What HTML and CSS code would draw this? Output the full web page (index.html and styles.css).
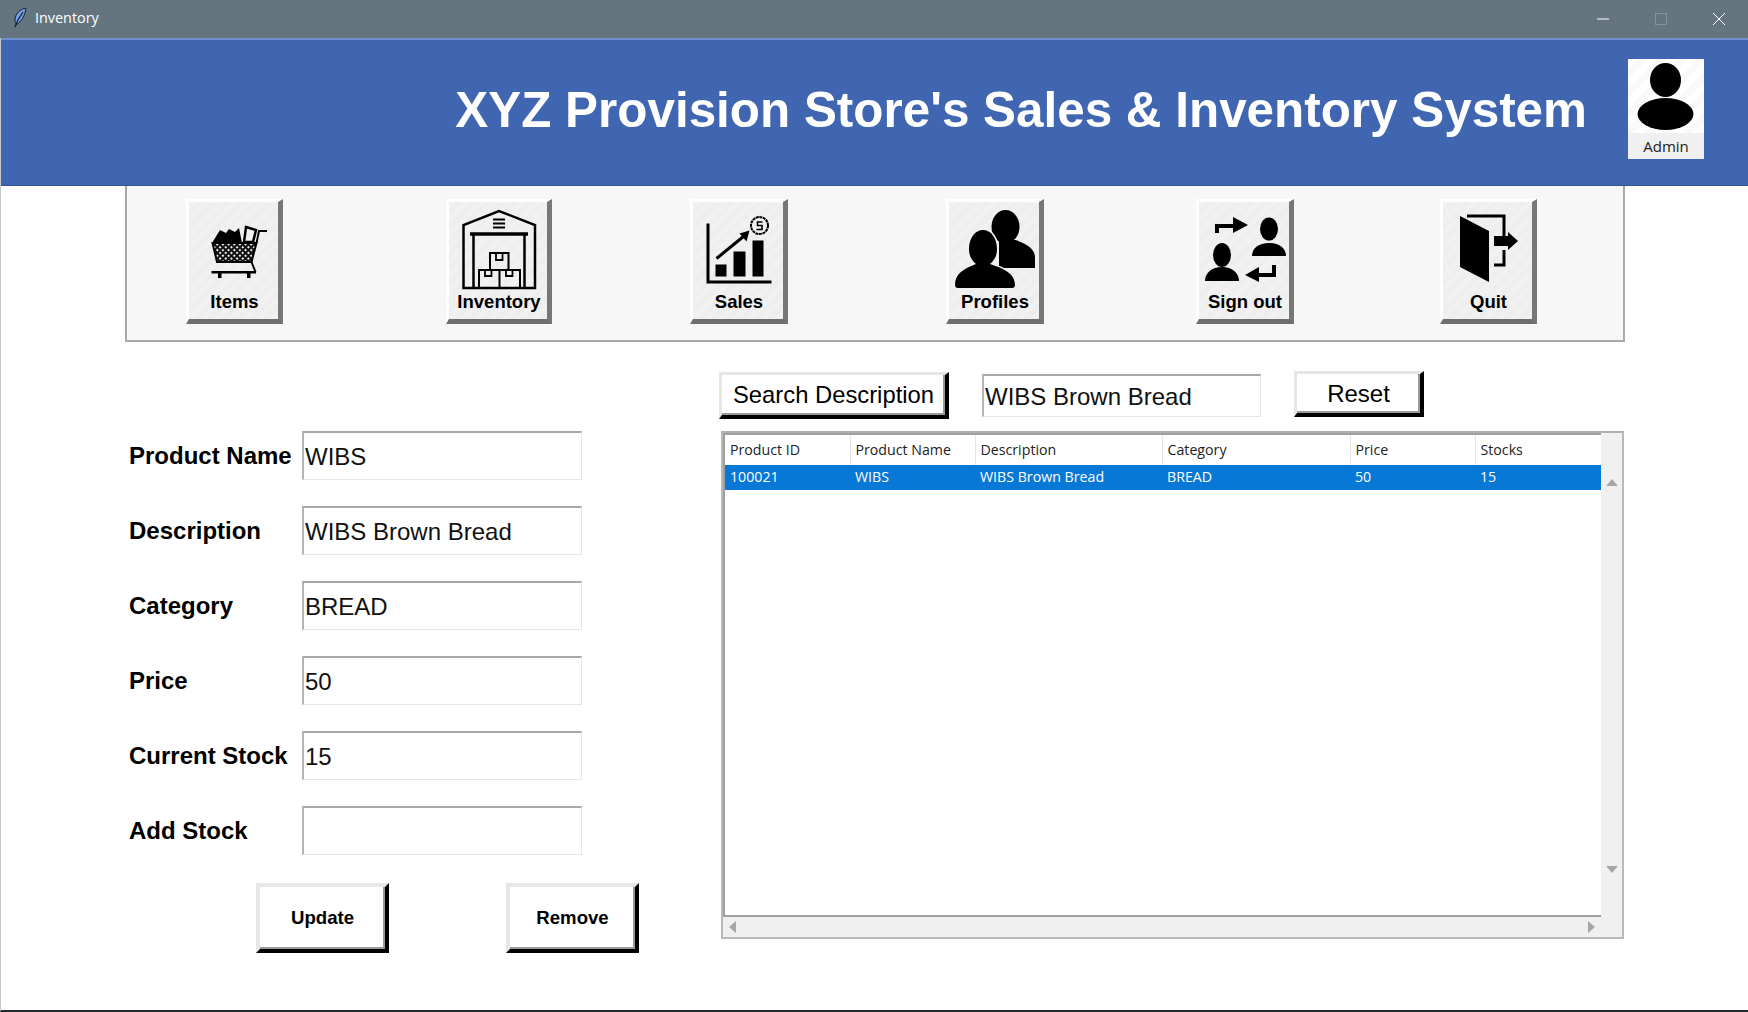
FILE: index.html
```html
<!DOCTYPE html>
<html>

<head>
  <title>Inventory</title>
  <meta charset="utf-8" />
  <link rel="stylesheet" href="styles.css">
</head>

<body>
  <div class="window">
    <div class="titlebar">
      <svg class="feather" width="14" height="20" viewBox="0 0 14 20">
        <path d="M13 0C7 1 2 6 2 12c0 2 .5 3 1.500 4.500C8 14 12 8 13 0z" fill="#6f9fe6" stroke="#16202c" stroke-width="1" />
        <path d="M10 4C7 8 4 13 2 19" fill="none" stroke="#0d141c" stroke-width="1.200" />
      </svg>
      <span class="titlebar-name">Inventory</span>
      <div class="controls">
        <div class="control"><svg width="12" height="12" viewBox="0 0 12 12"><path d="M0 6h12" stroke="#fff" /></svg></div>
        <div class="control"><svg width="12" height="12" viewBox="0 0 12 12"><rect x="0.5" y="0.5" width="11" height="11" fill="none" stroke="#84929b" /></svg></div>
        <div class="control"><svg width="12" height="12" viewBox="0 0 12 12"><path d="M0 0l12 12M12 0L0 12" stroke="#fff" /></svg></div>
      </div>
    </div>

    <header class="banner">
      <h1>XYZ Provision Store's Sales &amp; Inventory System</h1>
      <div class="user">
        <div class="user-pic">
          <svg width="75" height="74" viewBox="0 0 75 74">
            <ellipse cx="37.5" cy="21" rx="15.5" ry="17" />
            <ellipse cx="37.5" cy="55" rx="28" ry="16" />
          </svg>
        </div>
        <div class="user-name">Admin</div>
      </div>
    </header>

    <nav class="toolbar">
      <button class="tool tool-items">
        <svg width="90" height="88" viewBox="0 0 90 88">
          <defs>
            <pattern id="mesh" width="4" height="4" patternUnits="userSpaceOnUse" patternTransform="rotate(45)">
              <rect width="4" height="4" fill="#111" />
              <rect x="1" y="1" width="2" height="2" fill="#e8e8e8" />
            </pattern>
          </defs>
          <path d="M23 41l8-13 6 3 3-4 6 3 4-4 3 15z" />
          <path d="M57 25l10 3-3 12h-9z" fill="#f1f1f1" stroke="#000" stroke-width="2.5" />
          <path d="M23.500 41h44l-5 19H28z" fill="url(#mesh)" stroke="#000" stroke-width="2" />
          <path d="M67.500 41l2.500-12h8" fill="none" stroke="#000" stroke-width="2" />
          <path d="M62.500 60l4 10" fill="none" stroke="#000" stroke-width="2" />
          <path d="M22.500 69H67v2.500H22.500zM29 71.500h3.500V76H29zM58 71.500h3.500V76H58z" />
        </svg>
        <span>Items</span>
      </button>
      <button class="tool tool-inventory">
        <svg width="90" height="88" viewBox="0 0 90 88" fill="none" stroke="#000" stroke-width="2.500">
          <path d="M10.500 86V23L46 9l36 14v63z" />
          <path d="M17 32h58" stroke-width="3.500" />
          <path d="M20.500 33v53M71.500 33v53" />
          <path d="M40 17.500h12M40 21.500h12M40 25.500h12" stroke-width="2" />
          <path d="M37 51h18.500v17H37zM26 68h20.500v18H26zM46.500 68H67v18H46.500z" stroke-width="2" />
          <path d="M43 51v7h6.500v-7M32 68v6h6.500v-6M53 68v6h6.500v-6" stroke-width="1.800" />
        </svg>
        <span>Inventory</span>
      </button>
      <button class="tool tool-sales">
        <svg width="90" height="88" viewBox="0 0 90 88">
          <g transform="translate(1.500 1.500)">
            <path d="M12 20h3v57h62v3H12z" />
            <path d="M21 61h11v12H21zM39 48h12v25H39zM58 37h11v36H58z" />
            <path d="M22 55L49 33" stroke="#000" stroke-width="3" />
            <path d="M55 27l-3 11-7-8z" />
            <circle cx="65" cy="22" r="8.500" fill="none" stroke="#000" stroke-width="2" stroke-dasharray="3 .6" />
            <path d="M68 18.500h-5v3.500h4.500v4H62" fill="none" stroke="#000" stroke-width="1.600" />
          </g>
        </svg>
        <span>Sales</span>
      </button>
      <button class="tool tool-profiles">
        <svg width="90" height="88" viewBox="0 0 90 88">
          <ellipse cx="56.500" cy="24.700" rx="14" ry="16.700" />
          <path d="M50 38h17c12 5 19 9 19 18v10H50z" />
          <path d="M6 83c0-11 8-16 21-21-5-4-7-9-7-15 0-11 6-19 14-19s14 8 14 19c0 6-2 11-7 15 15 5 25 10 25 21 0 2-1 3-3 3H9c-2 0-3-1-3-3z" stroke="#f1f1f1" stroke-width="3" paint-order="stroke" />
        </svg>
        <span>Profiles</span>
      </button>
      <button class="tool tool-signout">
        <svg width="90" height="88" viewBox="0 0 90 88">
          <g transform="translate(1 1)">
            <ellipse cx="69" cy="26" rx="9" ry="11.500" />
            <path d="M52 53c0-8 7-13 17-13s17 5 17 13z" />
            <ellipse cx="22" cy="52" rx="9" ry="12" />
            <path d="M5 78c0-8 7-14 17-14s17 6 17 14z" />
            <path d="M17 30v-7h18" fill="none" stroke="#000" stroke-width="4" />
            <path d="M33 14l15 8-15 8z" />
            <path d="M74 62v10H57" fill="none" stroke="#000" stroke-width="4" />
            <path d="M59 64l-14 8 14 7z" />
          </g>
        </svg>
        <span>Sign out</span>
      </button>
      <button class="tool tool-quit">
        <svg width="90" height="88" viewBox="0 0 90 88">
          <path d="M17 14l29 15v51L17 65z" />
          <path d="M24 14h37v20M61 48v15H51" fill="none" stroke="#000" stroke-width="3" />
          <path d="M51 34h14v-4l10 9-10 9v-4H51z" />
        </svg>
        <span>Quit</span>
      </button>
    </nav>

    <main class="content">
      <section class="form">
        <div class="field"><label>Product Name</label><input class="entry" type="text" value="WIBS"></div>
        <div class="field"><label>Description</label><input class="entry" type="text" value="WIBS Brown Bread"></div>
        <div class="field"><label>Category</label><input class="entry" type="text" value="BREAD"></div>
        <div class="field"><label>Price</label><input class="entry" type="text" value="50"></div>
        <div class="field"><label>Current Stock</label><input class="entry" type="text" value="15"></div>
        <div class="field"><label>Add Stock</label><input class="entry" type="text" value=""></div>
        <div class="actions">
          <button class="btn btn-action">Update</button>
          <button class="btn btn-action">Remove</button>
        </div>
      </section>

      <section class="results">
        <div class="search">
          <button class="btn btn-search">Search Description</button>
          <input class="entry entry-search" type="text" value="WIBS Brown Bread">
          <button class="btn btn-reset">Reset</button>
        </div>
        <div class="frame">
          <div class="tree">
            <table>
              <thead>
                <tr>
                  <th>Product ID</th>
                  <th>Product Name</th>
                  <th>Description</th>
                  <th>Category</th>
                  <th>Price</th>
                  <th>Stocks</th>
                </tr>
              </thead>
              <tbody>
                <tr class="selected">
                  <td>100021</td>
                  <td>WIBS</td>
                  <td>WIBS Brown Bread</td>
                  <td>BREAD</td>
                  <td>50</td>
                  <td>15</td>
                </tr>
              </tbody>
            </table>
          </div>
          <div class="vscroll"><i class="arrow arrow-up"></i><i class="arrow arrow-down"></i></div>
          <div class="hscroll"><i class="arrow arrow-left"></i><i class="arrow arrow-right"></i></div>
          <div class="corner"></div>
        </div>
      </section>
    </main>
  </div>
</body>

</html>
```

FILE: styles.css
```css
* {
  box-sizing: border-box;
}

body {
  margin: 0;
  font-family: "Liberation Sans", Arial, sans-serif;
  background: #fff;
  overflow: hidden;
}

.window {
  display: flex;
  flex-direction: column;
  width: 1748px;
  height: 1012px;
  background: #fff;
  border-left: 1px solid #c8c8c8;
  border-bottom: 2px solid #1f2a2e;
}

.titlebar {
  display: flex;
  align-items: center;
  flex: 0 0 38px;
  margin-left: -1px;
  padding-left: 13px;
  background: #64757f;
  color: #fff;
}

.feather {
  margin-right: 8px;
  margin-bottom: 2px;
}

.titlebar-name {
  margin-bottom: 3px;
  font-family: "Open Sans", sans-serif;
  font-size: 14.400px;
}

.controls {
  display: flex;
  margin-left: auto;
}

.control {
  display: flex;
  align-items: center;
  justify-content: center;
  width: 58px;
  height: 38px;
}

.banner {
  display: flex;
  align-items: center;
  justify-content: flex-end;
  flex: 0 0 148px;
  padding-right: 44px;
  padding-bottom: 7px;
  background: #4166b1;
  border-top: 2px solid #6f8fd0;
  border-bottom: 1px solid #34528f;
}

.banner h1 {
  margin: 0 41px 0 0;
  color: #fff;
  font-size: 49.400px;
  font-weight: 700;
}

.user {
  width: 76px;
  height: 100px;
  background: #f0f0f0;
}

.user-pic {
  height: 74px;
  background: repeating-linear-gradient(135deg, #fff, #fff 7px, #f9f9f9 7px, #f9f9f9 14px);
}

.user-pic svg {
  display: block;
}

.user-name {
  font-family: "Open Sans", sans-serif;
  font-size: 15px;
  line-height: 26px;
  text-align: center;
  color: #222;
}

.toolbar {
  display: flex;
  align-items: flex-start;
  flex: 0 0 156px;
  margin: 0 123px 0 124px;
  padding-top: 13px;
  background: #f7f7f7;
  border: 2px solid #a9a9a9;
  border-top: 0;
}

.tool {
  display: flex;
  flex-direction: column;
  align-items: center;
  height: 125px;
  padding: 0;
  font-family: inherit;
  font-size: 18.500px;
  font-weight: 700;
  color: #000;
  background: repeating-linear-gradient(135deg, #f1f1f1, #f1f1f1 5px, #eeeeee 5px, #eeeeee 10px);
  border-style: solid;
  border-width: 3px 5px 5px 3px;
  border-color: #fff #777 #6f6f6f #fff;
}

.tool svg {
  display: block;
  flex: none;
}

.tool span {
  line-height: 22px;
  margin: 1px 0 0 2px;
}

.tool-items { width: 97px; margin-left: 59px; }
.tool-inventory { width: 106px; margin-left: 163px; }
.tool-sales { width: 98px; margin-left: 138px; }
.tool-profiles { width: 98px; margin-left: 158px; }
.tool-signout { width: 98px; margin-left: 152px; }
.tool-quit { width: 97px; margin-left: 146px; }

.content {
  display: flex;
  align-items: flex-start;
  flex: 1;
}

.form {
  width: 590px;
  margin-left: 128px;
  padding-top: 89px;
}

.field {
  display: flex;
  align-items: center;
  height: 49px;
  margin-bottom: 26px;
}

.field label {
  width: 173px;
  font-size: 24px;
  font-weight: 700;
  color: #000;
}

.entry {
  width: 280px;
  height: 49px;
  padding: 2px 0 0 1px;
  font-family: inherit;
  font-size: 24px;
  color: #111;
  background: #fff;
  border-style: solid;
  border-width: 2px 1px 1px 2px;
  border-color: #a8a8a8 #e6e6e6 #e6e6e6 #b4b4b4;
  outline: 0;
}

.actions {
  display: flex;
  gap: 117px;
  margin-left: 127px;
}

.btn {
  font-family: inherit;
  color: #000;
  background: #fff;
  border-style: solid;
  border-color: #e6e6e6 #000 #000 #e6e6e6;
  box-shadow: inset -2px -2px 0 #9a9a9a;
  padding: 0;
}

.btn-action {
  width: 133px;
  height: 70px;
  margin-top: 2px;
  font-size: 18.600px;
  font-weight: 700;
  border-width: 4px;
}

.results {
  width: 905px;
  padding-top: 29px;
}

.search {
  display: flex;
  align-items: flex-start;
  height: 47px;
  margin-bottom: 13px;
}

.btn-search {
  width: 230px;
  height: 47px;
  margin-top: 1px;
  font-size: 23.800px;
  border-width: 3px 4px 4px 3px;
}

.entry-search {
  width: 279px;
  height: 43px;
  margin: 3px 33px 0;
}

.btn-reset {
  width: 130px;
  height: 46px;
  font-size: 24px;
  border-width: 3px 4px 4px 3px;
}

.frame {
  display: grid;
  grid-template-columns: 1fr 21px;
  grid-template-rows: 1fr 20px;
  width: 903px;
  height: 508px;
  margin-left: 2px;
  background: #f0f0f0;
  border: 2px solid #b9b9b9;
  border-top-color: #b0b0b0;
}

.tree {
  background: #fff;
  border-style: solid;
  border-width: 2px 0 2px 2px;
  border-color: #a0a0a0;
}

.tree table {
  width: 100%;
  table-layout: fixed;
  border-collapse: collapse;
  font-family: "Open Sans", sans-serif;
  font-size: 14.200px;
}

.tree th,
.tree td {
  padding: 0 0 2px 5px;
  text-align: left;
  font-weight: 400;
  white-space: nowrap;
}

.tree th {
  height: 30px;
  color: #222;
  background: #fff;
  border-right: 1px solid #e5e5e5;
}

.tree th:last-child {
  border-right: 0;
}

.tree td {
  height: 25px;
}

.tree th:nth-child(1) { width: 125px; }
.tree th:nth-child(2) { width: 125px; }
.tree th:nth-child(3) { width: 187px; }
.tree th:nth-child(4) { width: 188px; }
.tree th:nth-child(5) { width: 125px; }

.selected td {
  color: #fff;
  background: #0878d6;
}

.vscroll {
  display: flex;
  flex-direction: column;
  align-items: center;
  justify-content: space-between;
  padding: 46px 0 44px;
}

.hscroll {
  display: flex;
  align-items: center;
  justify-content: space-between;
  padding: 0 6px;
}

.arrow {
  display: block;
  width: 0;
  height: 0;
  border-style: solid;
  border-color: transparent;
}

.arrow-up {
  border-width: 0 6px 7px;
  border-bottom-color: #a6a6a6;
}

.arrow-down {
  border-width: 7px 6px 0;
  border-top-color: #a6a6a6;
}

.arrow-left {
  border-width: 6px 7px 6px 0;
  border-right-color: #a6a6a6;
}

.arrow-right {
  border-width: 6px 0 6px 7px;
  border-left-color: #a6a6a6;
}
```
